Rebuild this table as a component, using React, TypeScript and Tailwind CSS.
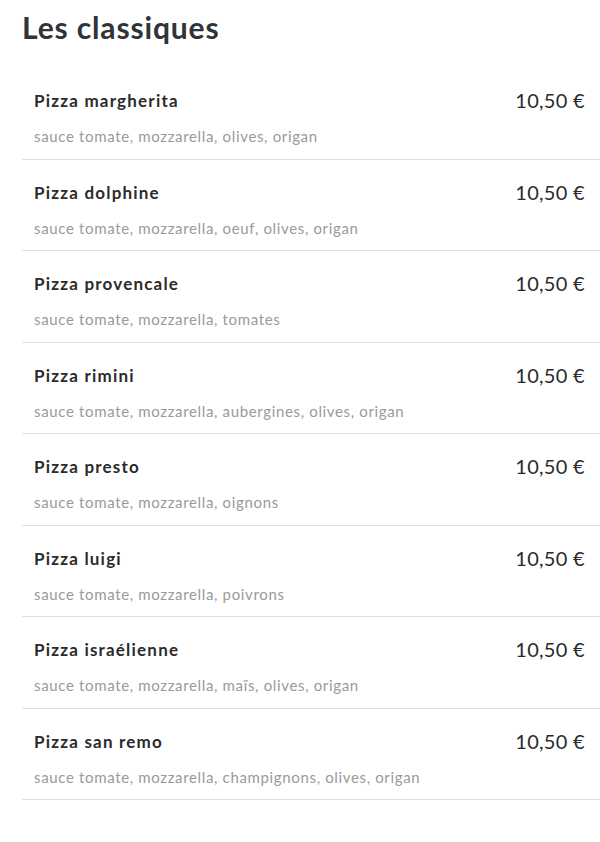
const pizzas = [
  { name: 'Pizza margherita', desc: 'sauce tomate, mozzarella, olives, origan' },
  { name: 'Pizza dolphine', desc: 'sauce tomate, mozzarella, oeuf, olives, origan' },
  { name: 'Pizza provencale', desc: 'sauce tomate, mozzarella, tomates' },
  { name: 'Pizza rimini', desc: 'sauce tomate, mozzarella, aubergines, olives, origan' },
  { name: 'Pizza presto', desc: 'sauce tomate, mozzarella, oignons' },
  { name: 'Pizza luigi', desc: 'sauce tomate, mozzarella, poivrons' },
  { name: 'Pizza israélienne', desc: 'sauce tomate, mozzarella, maïs, olives, origan' },
  { name: 'Pizza san remo', desc: 'sauce tomate, mozzarella, champignons, olives, origan' },
];

export default function App() {
  return (
    <div className="min-h-[842px] bg-white pl-[22px] pt-[7px] font-['Lato',sans-serif] text-[#333]">
      <h2 className="text-[30px] font-bold leading-[40px] tracking-[0.85px] text-[#2f3439]">Les classiques</h2>
      <ul className="mt-[21px]">
        {pizzas.map((p) => (
          <li
            key={p.name}
            className="flex justify-between border-b border-[#dde1e4] pl-[12px] pr-[15px] pt-[21px] h-[91.5px]"
          >
            <div>
              <div className="text-[17px] font-bold leading-[24px] tracking-[1.2px] text-[#2b2b2b]">{p.name}</div>
              <div className="mt-[13px] text-[15px] leading-[20px] tracking-[0.65px] text-[#9a9a9a]">{p.desc}</div>
            </div>
            <div className="-mt-[1px] text-[20px] leading-[24px] tracking-[0.3px] text-[#2b2b2b]">10,50 €</div>
          </li>
        ))}
      </ul>
    </div>
  );
}
